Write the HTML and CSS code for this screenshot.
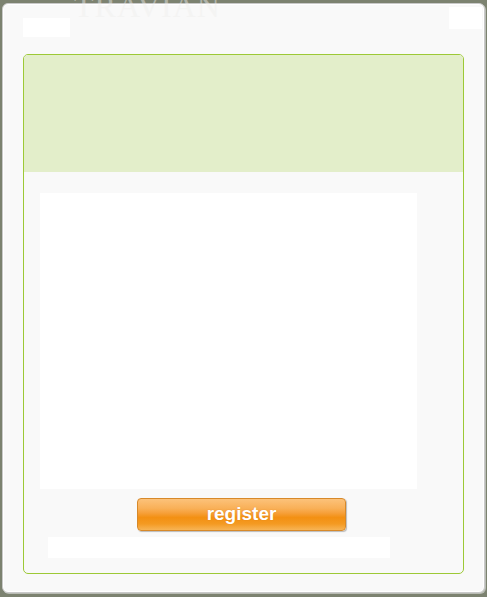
FILE: index.html
```html
<!DOCTYPE html>
<html>
<head>
<meta charset="utf-8">
<link rel="stylesheet" href="styles.css">
</head>
<body>
<div class="backdrop">
  <div class="ghost-logo">TRAVIAN</div>
  <div class="modal">
    <div class="modal-head">
      <div class="head-left"></div>
      <div class="head-right"></div>
    </div>
    <div class="panel">
      <div class="panel-top"></div>
      <div class="panel-body">
        <div class="content-box"></div>
        <div class="btn-row">
          <button class="register">register</button>
        </div>
        <div class="footer-bar"></div>
      </div>
    </div>
  </div>
</div>
</body>
</html>
```

FILE: styles.css
```css
html, body {
  margin: 0;
  padding: 0;
  width: 487px;
  height: 597px;
  overflow: hidden;
  font-family: "Liberation Sans", Arial, sans-serif;
}
.backdrop {
  position: relative;
  width: 487px;
  height: 597px;
  background: #7c8270;
  box-sizing: border-box;
  padding: 3px 2px 4px 2px;
}
.ghost-logo {
  position: absolute;
  left: 74px;
  top: -12px;
  font-family: "Liberation Serif", serif;
  font-size: 32px;
  letter-spacing: 1px;
  color: #f0efed;
  z-index: 2;
  opacity: 0.45;
}
.modal {
  position: relative;
  height: 590px;
  box-sizing: border-box;
  background: #f9f9f9;
  border: 1px solid #c9c9c9;
  border-radius: 6px;
  box-shadow: inset 0 0 0 1px #ffffff, 1px 1px 0 #b9bcb4;
  padding: 14px 20px 18px 20px;
  display: flex;
  flex-direction: column;
}
.modal-head {
  display: flex;
  justify-content: space-between;
  height: 36px;
}
.head-left {
  width: 47px;
  height: 19px;
  background: #ffffff;
}
.head-right {
  width: 33px;
  height: 22px;
  background: #ffffff;
  margin-top: -11px;
  margin-right: -18px;
}
.panel {
  flex: 1;
  border: 1px solid #9dc936;
  border-radius: 5px;
  background: #f9f9f9;
  display: flex;
  flex-direction: column;
  overflow: hidden;
}
.panel-top {
  height: 117px;
  background: #e3eeca;
}
.panel-body {
  flex: 1;
  padding: 21px 0 0 16px;
}
.content-box {
  width: 377px;
  height: 296px;
  background: #ffffff;
}
.btn-row {
  padding-left: 97px;
  margin-top: 9px;
}
.register {
  width: 209px;
  height: 33px;
  border: 1px solid #d7892a;
  border-radius: 4px;
  background: linear-gradient(to bottom, #fcc27a 0%, #f9b058 30%, #f6a03a 45%, #f39012 60%, #f49a22 80%, #f7b455 100%);
  box-shadow: 1px 1px 1px rgba(0,0,0,0.25);
  color: #ffffff;
  font-family: "Liberation Sans", Arial, sans-serif;
  font-weight: bold;
  font-size: 19px;
  padding: 0 0 2px 0;
  line-height: 28px;
  text-shadow: 0 0 1px rgba(180,90,0,0.4);
}
.footer-bar {
  width: 342px;
  height: 21px;
  background: #ffffff;
  margin-top: 6px;
  margin-left: 8px;
}
```
